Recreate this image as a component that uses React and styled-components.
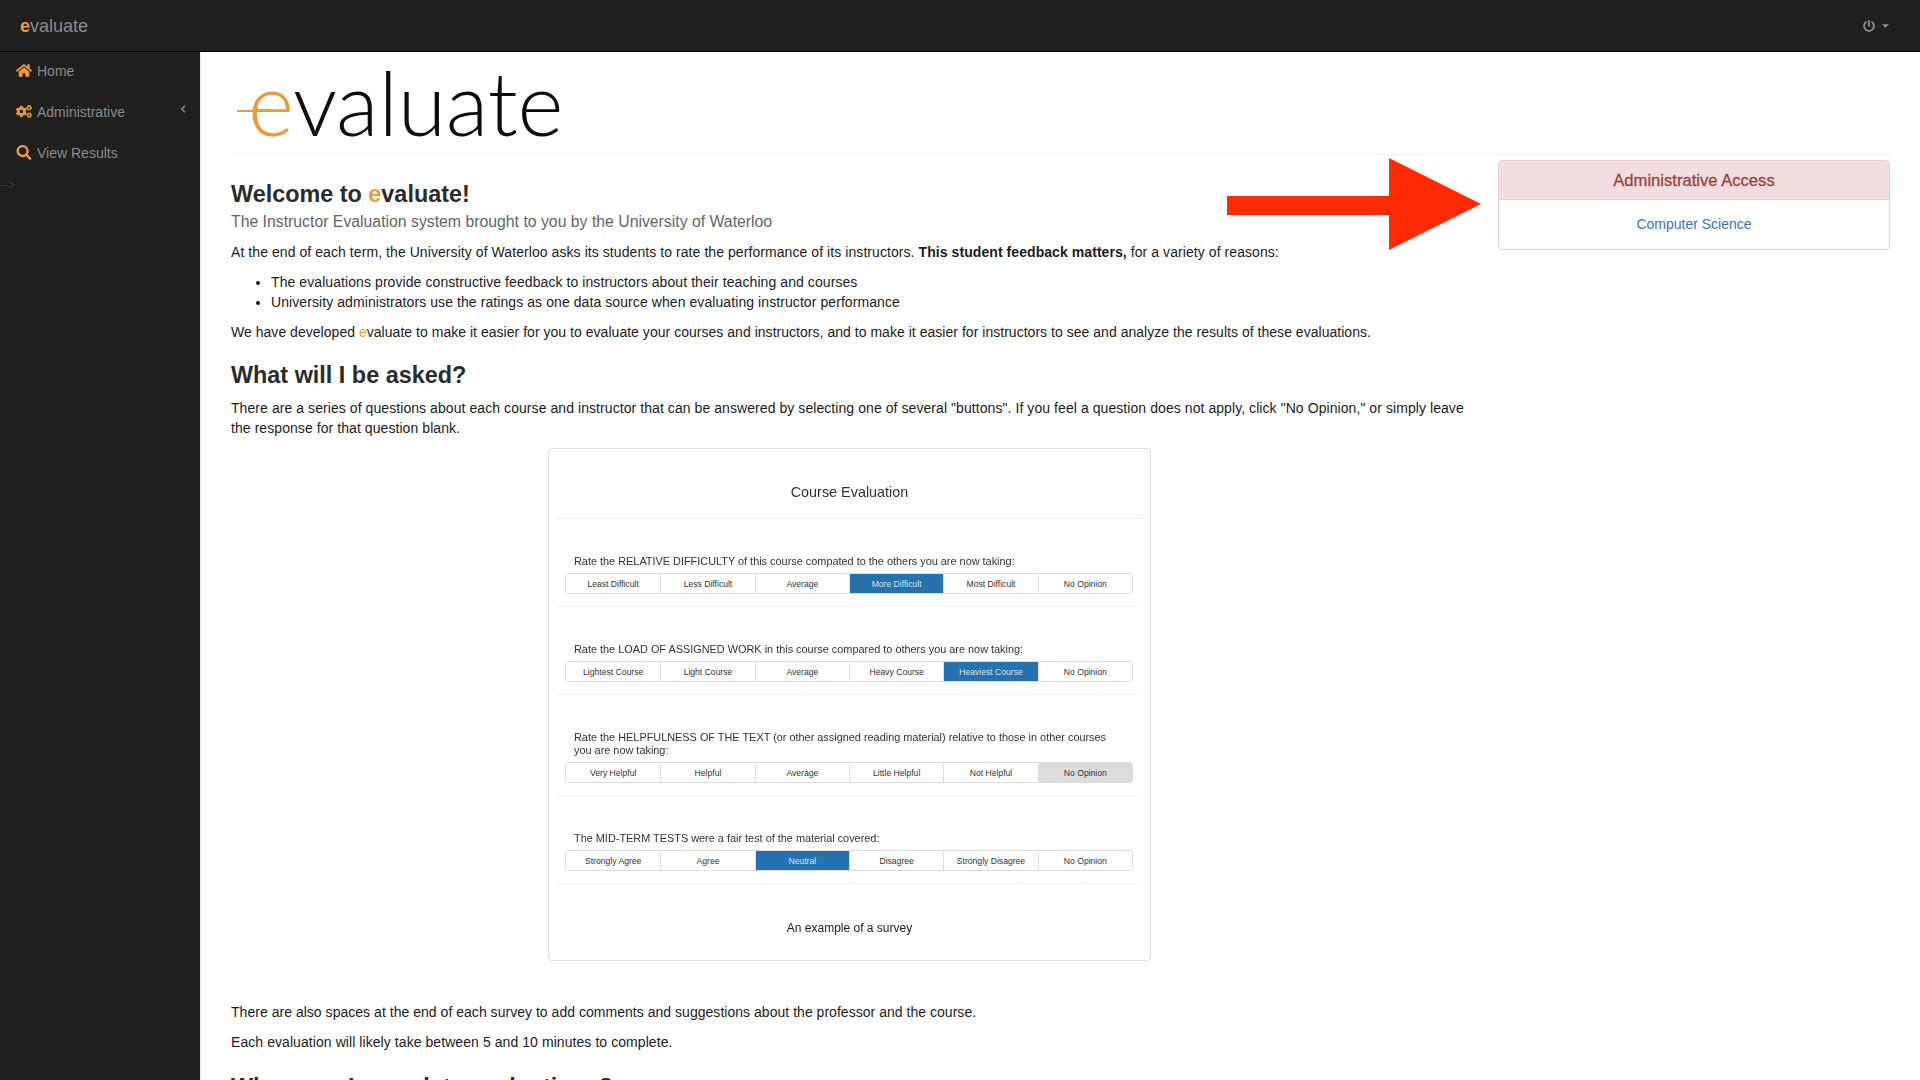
import styled, { createGlobalStyle } from "styled-components";
import { FaHome, FaCogs, FaSearch, FaPowerOff, FaAngleLeft, FaCaretDown } from "react-icons/fa";

const questions = [
  {
    text: "Rate the RELATIVE DIFFICULTY of this course compated to the others you are now taking:",
    options: ["Least Difficult", "Less Difficult", "Average", "More Difficult", "Most Difficult", "No Opinion"],
    selected: 3,
  },
  {
    text: "Rate the LOAD OF ASSIGNED WORK in this course compared to others you are now taking:",
    options: ["Lightest Course", "Light Course", "Average", "Heavy Course", "Heaviest Course", "No Opinion"],
    selected: 4,
  },
  {
    text: "Rate the HELPFULNESS OF THE TEXT (or other assigned reading material) relative to those in other courses you are now taking:",
    options: ["Very Helpful", "Helpful", "Average", "Little Helpful", "Not Helpful", "No Opinion"],
    selected: 5,
    muted: true,
  },
  {
    text: "The MID-TERM TESTS were a fair test of the material covered:",
    options: ["Strongly Agree", "Agree", "Neutral", "Disagree", "Strongly Disagree", "No Opinion"],
    selected: 2,
  },
];

const App = () => {
  return (
    <Page>
      <GlobalStyle />
      <TopBar>
        <Brand>
          <Accent>e</Accent>valuate
        </Brand>
        <PowerMenu>
          <FaPowerOff size={12} />
          <FaCaretDown size={11} />
        </PowerMenu>
      </TopBar>
      <Layout>
        <Sidebar>
          <NavItem>
            <FaHome />
            Home
          </NavItem>
          <NavItem>
            <FaCogs />
            Administrative
            <Chevron>
              <FaAngleLeft size={12} />
            </Chevron>
          </NavItem>
          <NavItem>
            <FaSearch />
            View Results
          </NavItem>
          <StrayMark>--&gt;</StrayMark>
        </Sidebar>
        <Main>
          <PageHeader>
            <Logo>
              <LogoE>e</LogoE>valuate
            </Logo>
          </PageHeader>
          <Columns>
            <Content>
              <Heading>
                Welcome to <Accent>e</Accent>valuate!
              </Heading>
              <Lead>The Instructor Evaluation system brought to you by the University of Waterloo</Lead>
              <Text>
                At the end of each term, the University of Waterloo asks its students to rate the performance of its
                instructors. <strong>This student feedback matters,</strong> for a variety of reasons:
              </Text>
              <List>
                <li>The evaluations provide constructive feedback to instructors about their teaching and courses</li>
                <li>University administrators use the ratings as one data source when evaluating instructor performance</li>
              </List>
              <Text $tight>
                We have developed <Accent $plain>e</Accent>valuate to make it easier for you to evaluate your courses and
                instructors, and to make it easier for instructors to see and analyze the results of these evaluations.
              </Text>
              <SubHeading>What will I be asked?</SubHeading>
              <Text>
                There are a series of questions about each course and instructor that can be answered by selecting one
                of several "buttons". If you feel a question does not apply, click "No Opinion," or simply leave the
                response for that question blank.
              </Text>
              <SurveyCard>
                <SurveyTitle>Course Evaluation</SurveyTitle>
                {questions.map((q) => (
                  <Question key={q.text}>
                    <QuestionText>{q.text}</QuestionText>
                    <Options>
                      {q.options.map((option, i) => (
                        <Option key={option} $active={i === q.selected} $muted={q.muted}>
                          {option}
                        </Option>
                      ))}
                    </Options>
                  </Question>
                ))}
                <Caption>An example of a survey</Caption>
              </SurveyCard>
              <Text $tight>
                There are also spaces at the end of each survey to add comments and suggestions about the professor and
                the course.
              </Text>
              <Text>Each evaluation will likely take between 5 and 10 minutes to complete.</Text>
              <LastHeading>When can I complete evaluations?</LastHeading>
            </Content>
            <Aside>
              <Arrow viewBox="0 0 255 92" aria-hidden="true">
                <polygon points="0,38 162,38 162,0 254,46 162,92 162,57 0,57" fill="#ff2a06" />
              </Arrow>
              <Panel>
                <PanelHeading>Administrative Access</PanelHeading>
                <PanelBody>
                  <PanelLink href="#">Computer Science</PanelLink>
                </PanelBody>
              </Panel>
            </Aside>
          </Columns>
        </Main>
      </Layout>
    </Page>
  );
};

export default App;

const GlobalStyle = createGlobalStyle`
  html, body {
    margin: 0;
    height: 100%;
    overflow: hidden;
    background: #fff;
  }
  * {
    box-sizing: border-box;
  }
`;

const Page = styled.div`
  height: 1080px;
  overflow: hidden;
  font-family: "Liberation Sans", Arial, sans-serif;
  font-size: 14px;
  line-height: 20px;
  color: #333;
`;

const TopBar = styled.header`
  height: 52px;
  padding: 0 29px 0 20px;
  background: #1f1f1f;
  border-bottom: 1px solid #000;
  display: flex;
  align-items: center;
  justify-content: space-between;
`;

const Brand = styled.div`
  font-size: 18px;
  color: #8a8a8a;
`;

const Accent = styled.span`
  color: #ee9a35;
  font-weight: ${({ $plain }) => ($plain ? 400 : 700)};
`;

const PowerMenu = styled.div`
  display: flex;
  align-items: center;
  gap: 5px;
  color: #8a8a8a;
`;

const Layout = styled.div`
  display: flex;
  height: 1028px;
`;

const Sidebar = styled.nav`
  width: 200px;
  flex: none;
  background: #1f1f1f;
`;

const NavItem = styled.div`
  height: 41px;
  padding: 0 0 4px 37px;
  position: relative;
  display: flex;
  align-items: center;
  color: #8a8a8a;
  font-size: 14px;

  > svg {
    position: absolute;
    left: 16px;
    top: 11px;
    width: 16px;
    height: 15px;
    color: #ee9a35;
  }
`;

const Chevron = styled.span`
  position: absolute;
  right: 11px;
  top: 7px;
  color: #777;
`;

const StrayMark = styled.div`
  font-size: 12px;
  color: #3a3a3a;
`;

const Main = styled.main`
  flex: 1;
  min-width: 0;
  padding: 0 30px;
  background: #fff;
  border-left: 1px solid #e7e7e7;
`;

const PageHeader = styled.div`
  height: 103px;
  border-bottom: 1px solid #eee;
  padding-left: 5px;
`;

const Logo = styled.h1`
  margin: 0;
  font-family: Lato, sans-serif;
  font-weight: 300;
  font-size: 88px;
  line-height: 100px;
  letter-spacing: -0.2px;
  color: #0c0c0c;
`;

const LogoE = styled.span`
  position: relative;
  margin-left: 12px;
  color: #ee9a35;

  &::before {
    content: "";
    position: absolute;
    left: -11px;
    top: 60px;
    width: 32px;
    height: 3px;
    background: #ee9a35;
    clip-path: polygon(0 45%, 100% 0, 100% 100%, 0 100%);
  }
`;

const Columns = styled.div`
  display: grid;
  grid-template-columns: 1237px 392px;
  column-gap: 30px;
`;

const Content = styled.div`
  min-width: 0;
`;

const Heading = styled.h2`
  margin: 26px 0 0;
  font-size: 23.4px;
  line-height: 26px;
  font-weight: 700;
  color: #2b2b2b;
`;

const SubHeading = styled.h2`
  margin: 20px 0 10px;
  font-size: 23.4px;
  line-height: 26px;
  font-weight: 700;
  color: #2b2b2b;
`;

const LastHeading = styled(SubHeading)`
  margin-top: 22px;
`;

const Lead = styled.p`
  margin: 5px 0 10px;
  font-size: 15.8px;
  line-height: 20px;
  color: #666;
`;

const Text = styled.p`
  margin: 0 0 10px;
  color: #1c1c1c;
  letter-spacing: ${({ $tight }) => ($tight ? "0.03px" : "0.07px")};
`;

const List = styled.ul`
  margin: 0 0 10px;
  padding-left: 40px;
  color: #1c1c1c;
  letter-spacing: 0.08px;
`;

const SurveyCard = styled.div`
  width: 603px;
  height: 513px;
  margin: 0 auto 41px;
  padding: 0 7px;
  border: 1px solid #ddd;
  border-radius: 4px;
  color: #333;
  filter: blur(0.3px);
`;

const SurveyTitle = styled.div`
  height: 70px;
  padding-top: 33px;
  text-align: center;
  font-size: 14.4px;
  line-height: 20px;
  border-bottom: 1px solid #eee;
`;

const Question = styled.div`
  padding: 36px 10px 12px 9px;
  border-bottom: 1px solid #f2f2f2;
`;

const QuestionText = styled.div`
  padding: 0 9px;
  margin-bottom: 5px;
  font-size: 10.9px;
  line-height: 13px;
`;

const Options = styled.div`
  display: grid;
  grid-template-columns: repeat(6, 1fr);
  height: 21px;
  border-radius: 3px;
  border: 1px solid #ddd;
  overflow: hidden;
`;

const Option = styled.div`
  display: flex;
  align-items: center;
  justify-content: center;
  font-size: 8.6px;
  white-space: nowrap;
  color: ${({ $active, $muted }) => ($active && !$muted ? "#cfe0ee" : "#333")};
  background: ${({ $active, $muted }) => ($active ? ($muted ? "#dcdcdc" : "#2672ae") : "#fff")};
  border-left: 1px solid #ddd;

  &:first-child {
    border-left: 0;
  }
`;

const Caption = styled.div`
  margin-top: 36px;
  text-align: center;
  font-size: 12px;
  line-height: 16px;
  color: #1c1c1c;
`;

const Aside = styled.aside`
  position: relative;
  padding-top: 5px;
`;

const Arrow = styled.svg`
  position: absolute;
  left: -271px;
  top: 3px;
  width: 255px;
  height: 92px;
`;

const Panel = styled.div`
  height: 90px;
  border: 1px solid #ebccd1;
  border-radius: 4px;
  overflow: hidden;
`;

const PanelHeading = styled.div`
  height: 39px;
  padding-top: 1px;
  display: flex;
  align-items: center;
  justify-content: center;
  background: #f2dede;
  border-bottom: 1px solid #ebccd1;
  color: #a03f3e;
  font-size: 16.6px;
  -webkit-text-stroke: 0.3px #a03f3e;
`;

const PanelBody = styled.div`
  padding-top: 14px;
  text-align: center;
`;

const PanelLink = styled.a`
  color: #3b72b8;
  text-decoration: none;
`;
